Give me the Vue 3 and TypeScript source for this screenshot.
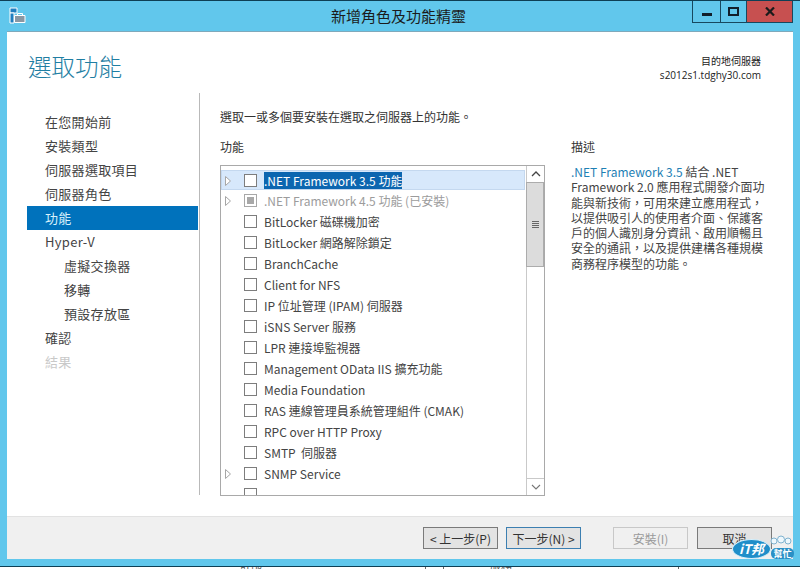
<script setup lang="ts">
interface Feature { label: string; arrow?: boolean; state?: 'selected' | 'partial' }
const nav = [
  { t: '在您開始前' }, { t: '安裝類型' }, { t: '伺服器選取項目' }, { t: '伺服器角色' },
  { t: '功能', active: true }, { t: 'Hyper-V' }, { t: '虛擬交換器', sub: true }, { t: '移轉', sub: true },
  { t: '預設存放區', sub: true }, { t: '確認' }, { t: '結果', disabled: true },
]
const features: Feature[] = [
  { label: '.NET Framework 3.5 功能', arrow: true, state: 'selected' },
  { label: '.NET Framework 4.5 功能 (已安裝)', arrow: true, state: 'partial' },
  { label: 'BitLocker 磁碟機加密' },
  { label: 'BitLocker 網路解除鎖定' },
  { label: 'BranchCache' },
  { label: 'Client for NFS' },
  { label: 'IP 位址管理 (IPAM) 伺服器' },
  { label: 'iSNS Server 服務' },
  { label: 'LPR 連接埠監視器' },
  { label: 'Management OData IIS 擴充功能' },
  { label: 'Media Foundation' },
  { label: 'RAS 連線管理員系統管理組件 (CMAK)' },
  { label: 'RPC over HTTP Proxy' },
  { label: 'SMTP  伺服器' },
  { label: 'SNMP Service', arrow: true },
  { label: '' },
]
</script>

<template>
  <div class="window">
    <header class="titlebar">
      <svg class="appicon" width="17" height="17" viewBox="0 0 17 17">
        <path d="M1 1h7v5H1z" fill="#1f7fc0" stroke="#fff" stroke-width="1" />
        <path d="M1 6h4v10H1z" fill="#1f7fc0" stroke="#fff" stroke-width="1" />
        <path d="M5.500 8.500h10.500v7H5.500z" fill="#8a97a3" stroke="#fff" stroke-width="1" />
        <path d="M8.500 8.500v-2h5v2" fill="none" stroke="#fff" stroke-width="1" />
      </svg>
      <div class="title">新增角色及功能精靈</div>
      <div class="controls">
        <div class="ctl"><span class="min"></span></div>
        <div class="ctl"><span class="max"></span></div>
        <div class="ctl close">
          <svg width="10" height="9" viewBox="0 0 10 9"><path d="M1 .5l8 8M9 .5l-8 8" stroke="#1b1b1b" stroke-width="2.200" /></svg>
        </div>
      </div>
    </header>

    <div class="client">
      <div class="head">
        <h1>選取功能</h1>
        <div class="dest"><div>目的地伺服器</div><div>s2012s1.tdghy30.com</div></div>
      </div>
      <div class="body">
        <nav class="nav">
          <div
            v-for="n in nav"
            :key="n.t"
            class="navitem"
            :class="{ active: n.active, sub: n.sub, disabled: n.disabled }"
          >{{ n.t }}</div>
        </nav>
        <main class="main">
          <p class="intro">選取一或多個要安裝在選取之伺服器上的功能。</p>
          <div class="cols">
            <section class="left">
              <div class="label">功能</div>
              <div class="listbox">
                <div class="list">
                  <div v-for="(f, i) in features" :key="i" class="row" :class="{ partial: f.state === 'partial' }">
                    <span class="arrow"><svg v-if="f.arrow" width="6" height="10" viewBox="0 0 6 10"><path d="M.5.500l5 4.500-5 4.500z" fill="#fff" stroke="#a6a6a6" /></svg></span>
                    <span class="check"><span v-if="f.state === 'partial'" class="fill"></span></span>
                    <span class="text" :class="{ sel: f.state === 'selected' }">{{ f.label }}</span>
                    <span v-if="f.state === 'selected'" class="hl"></span>
                  </div>
                </div>
                <div class="scroll">
                  <div class="sbtn"><svg width="10" height="6" viewBox="0 0 10 6"><path d="M1 5l4-4 4 4" fill="none" stroke="#444" stroke-width="1.300" /></svg></div>
                  <div class="thumb"><span></span><span></span><span></span><span></span></div>
                  <div class="track"></div>
                  <div class="sbtn down"><svg width="10" height="6" viewBox="0 0 10 6"><path d="M1 1l4 4 4-4" fill="none" stroke="#777" stroke-width="1.100" /></svg></div>
                </div>
              </div>
            </section>
            <section class="right">
              <div class="label">描述</div>
              <p class="desc"><span class="link">.NET Framework 3.5</span> 結合 .NET Framework 2.0 應用程式開發介面功能與新技術，可用來建立應用程式，以提供吸引人的使用者介面、保護客戶的個人識別身分資訊、啟用順暢且安全的通訊，以及提供建構各種規模商務程序模型的功能。</p>
            </section>
          </div>
        </main>
      </div>
      <footer class="footer">
        <button class="btn prev">&lt; 上一步(P)</button>
        <button class="btn next">下一步(N) &gt;</button>
        <button class="btn install">安裝(I)</button>
        <button class="btn cancel">取消</button>
      </footer>
    </div>
    <div class="under">
      <span class="u1">計部</span><i class="v v1"></i><i class="v v2"></i><span class="u3">服務</span><i class="v v3"></i>
    </div>

    <div class="badge">
      <svg class="people" width="22" height="13" viewBox="0 0 22 13">
        <g fill="#eef8fd" stroke="#7fb2cf" stroke-width="1">
          <circle cx="4" cy="6" r="3" />
          <circle cx="11" cy="4.500" r="3.500" />
          <circle cx="18" cy="6" r="3" />
        </g>
      </svg>
      <span class="it">iT邦</span><span class="help">幫忙</span>
    </div>
  </div>
</template>

<style>
html, body { margin: 0; background: #fff; overflow: hidden; }
</style>

<style scoped>
.window {
  position: relative;
  width: 800px;
  height: 569px;
  overflow: hidden;
  background: #61c7ec;
  border-top: 1px solid #0e3f55;
  box-sizing: border-box;
  display: flex;
  flex-direction: column;
  font-family: "Noto Sans CJK TC", "Open Sans", sans-serif;
  color: #333;
}
.titlebar {
  height: 30px;
  flex: none;
  display: flex;
  position: relative;
  justify-content: center;
}
.appicon { position: absolute; left: 9px; top: 6px; }
.title { font-size: 15px; color: #1b1b1b; line-height: 29px; margin-left: -3px; }
.controls { position: absolute; top: 0; right: 7px; display: flex; height: 21px; border: 1px solid #17485f; border-top: 0; }
.ctl { width: 27px; display: flex; align-items: center; justify-content: center; border-right: 1px solid #17485f; }
.ctl:nth-child(2) { width: 25px; }
.ctl.close { width: 45px; background: #c75050; border-right: 0; }
.min { width: 10px; height: 3px; background: #111f2b; margin-top: 5px; }
.max { width: 7px; height: 5px; border: 2px solid #111f2b; }
.client {
  margin: 0 7px;
  height: 528px;
  box-sizing: border-box;
  background: #fff;
  display: flex;
  flex-direction: column;
  border-top: 1px solid #7fa9bb;
  flex: none;
}
.head { height: 61px; display: flex; justify-content: space-between; padding: 18px 32px 0 21px; box-sizing: border-box; flex: none; }
h1 { margin: 0; font-size: 23.500px; font-weight: 300; color: #1f7ea3; line-height: 33px; }
.dest { text-align: right; font-size: 10px; line-height: 14px; color: #222; padding-top: 4px; font-family: "Open Sans", "Noto Sans CJK TC", sans-serif; }
.body { flex: 1; display: flex; min-height: 0; }
.nav { width: 171px; margin-left: 20px; padding-top: 17px; flex: none; }
.navitem { height: 24px; line-height: 23px; font-size: 13px; padding-left: 18px; color: #444; letter-spacing: .3px; }
.navitem.active { background: #0072bc; color: #d9f1fb; }
.navitem.sub { padding-left: 37px; }
.navitem.disabled { color: #c9c9c9; }
.main { margin-bottom: 21px; border-left: 1px solid #b9b9b9; margin-left: 1px; padding-left: 20px; flex: 1; min-width: 0; }
.intro { margin: 15px 0 0; font-size: 12px; line-height: 17px; color: #333; }
.cols { display: flex; margin-top: 13px; }
.left { width: 326px; flex: none; }
.label { font-size: 12px; line-height: 17px; color: #333; }
.listbox { margin-top: 10px; width: 325px; height: 331px; border: 1px solid #a9a9a9; box-sizing: border-box; display: flex; background: #fff; }
.list { flex: 1; overflow: hidden; padding-top: 4px; min-width: 0; }
.row { height: 21px; display: flex; align-items: center; position: relative; font-size: 12px; color: #444; }
.row:first-child { height: 20px; box-sizing: border-box; padding-top: 1px; }
.row.partial { color: #9c9c9c; }
.arrow { width: 6px; margin-left: 4px; margin-right: 13px; height: 10px; flex: none; display: flex; z-index: 1; }
.check { width: 11px; height: 11px; border: 1px solid #7d7d7d; background: #fff; flex: none; display: flex; align-items: center; justify-content: center; z-index: 1; }
.partial .check { border-color: #a8a8a8; }
.fill { width: 7px; height: 7px; background: #a8a8a8; }
.text { margin-left: 7px; white-space: pre; z-index: 1; line-height: 17px; }
.text.sel { background: #0c66b0; color: #fff; }
.hl { position: absolute; left: 0; right: 1px; top: 0; bottom: 0; background: #d7e8fb; border: 1px solid #c4d8ef; box-sizing: border-box; }
.scroll { width: 17px; flex: none; border-left: 1px solid #c9c9c9; display: flex; flex-direction: column; background: #fff; }
.sbtn { height: 16px; display: flex; align-items: center; justify-content: center; flex: none; }
.sbtn.down { border-top: 1px solid #c9c9c9; }
.thumb { height: 85px; flex: none; background: #dcdcdc; border: 1px solid #acacac; box-sizing: border-box; display: flex; flex-direction: column; justify-content: center; align-items: center; gap: 1px; margin-left: -1px; }
.thumb span { width: 7px; height: 1px; background: #666; }
.track { flex: 1; }
.right { margin-left: 25px; width: 197px; }
.desc { margin: 9px 0 0; font-size: 12px; line-height: 15.300px; color: #444; }
.link { color: #1e7fb5; }
.footer {
  height: 43px;
  flex: none;
  box-sizing: border-box;
  background: #f0f0f0;
  border-top: 1px solid #e2e2e2;
  display: flex;
  align-items: flex-start;
  padding: 10px 21px 0 0;
  justify-content: flex-end;
}
.btn {
  height: 22px;
  width: 75px;
  padding: 0;
  border: 1px solid #7a7a7a;
  background: #e3e3e3;
  font: inherit;
  font-size: 12px;
  color: #333;
}
.prev { margin-right: 8px; }
.next { border-color: #3c7fb1; margin-right: 32px; }
.install { background: #f0f0f0; border-color: #c8c8c8; color: #9a9a9a; margin-right: 9px; }
.under { height: 3px; background: #fff; border-top: 1px solid #0e3f55; flex: none; overflow: hidden; position: relative; margin-top: 7px; font-size: 11px; color: #555; }
.under .u1 { position: absolute; left: 240px; top: -10px; }
.under .u3 { position: absolute; left: 490px; top: -10px; }
.v { position: absolute; top: 0; width: 1px; height: 3px; background: #666; }
.v1 { left: 425px; }
.v2 { left: 443px; }
.v3 { left: 678px; }
.badge {
  position: absolute;
  left: 732px;
  top: 534px;
  width: 62px;
  height: 25px;
}
.people { position: absolute; left: 38px; top: 0; }
.it {
  position: absolute;
  left: 0;
  top: 4px;
  width: 39px;
  height: 20px;
  box-sizing: border-box;
  border-radius: 50%;
  background: #1f8ec9;
  border: 1px solid #d8f0fb;
  color: #fff;
  font-size: 13px;
  line-height: 17px;
  font-weight: 700;
  font-style: italic;
  text-align: center;
  font-family: "Noto Sans CJK TC", sans-serif;
}
.help {
  position: absolute;
  left: 39px;
  top: 13px;
  width: 23px;
  height: 11px;
  background: #2a90c6;
  border-radius: 5px;
  color: #fff;
  font-size: 9px;
  line-height: 11px;
  text-align: center;
  font-weight: 700;
}
</style>
